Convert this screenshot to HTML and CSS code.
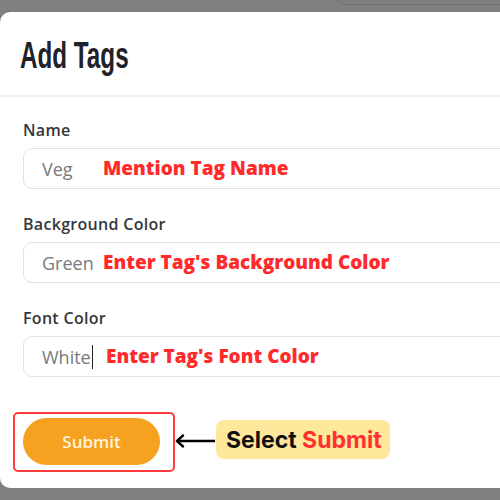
FILE: index.html
```html
<!DOCTYPE html>
<html>
<head>
<meta charset="utf-8">
<link rel="stylesheet" href="styles.css">
</head>
<body>
<div class="behind"></div>
<div class="modal">
  <div class="modal-header"><h1 class="title">Add Tags</h1></div>
  <div class="modal-body">
    <div class="field">
      <label class="label">Name</label>
      <div class="input"><span class="value">Veg</span><span class="note">Mention Tag Name</span></div>
    </div>
    <div class="field">
      <label class="label">Background Color</label>
      <div class="input"><span class="value">Green</span><span class="note">Enter Tag's Background Color</span></div>
    </div>
    <div class="field">
      <label class="label">Font Color</label>
      <div class="input"><span class="value">White</span><span class="caret"></span><span class="note note-3">Enter Tag's Font Color</span></div>
    </div>
    <div class="actions">
      <div class="highlight"><button class="submit">Submit</button></div>
      <div class="arrow">
        <svg width="40" height="14" viewBox="0 0 40 14"><path d="M40 7H3" stroke="#000" stroke-width="2.4" fill="none"/><path d="M8 1.5L2 7l6 5.5" stroke="#000" stroke-width="2.4" fill="none" stroke-linecap="round" stroke-linejoin="round"/></svg>
      </div>
      <div class="callout">Select <span class="red">Submit</span></div>
    </div>
  </div>
</div>
</body>
</html>
```
FILE: styles.css
```css
html, body {
  margin: 0;
  padding: 0;
  background: #7f7f7f;
  overflow: hidden;
  width: 500px;
  height: 500px;
}
body {
  position: relative;
  font-family: "Open Sans", "Liberation Sans", sans-serif;
}
.behind {
  position: absolute;
  left: 336px;
  top: -20px;
  width: 200px;
  height: 23px;
  border: 1px solid #6f6f6f;
  border-radius: 9px;
}
.modal {
  margin-top: 12px;
  width: 620px;
  height: 476px;
  background: #fff;
  border-radius: 10px;
  box-sizing: border-box;
}
.modal-header {
  height: 83px;
  border-bottom: 2px solid #eeeeee;
  display: flex;
  align-items: center;
  padding-left: 20px;
}
.title {
  margin: 0;
  font-family: "Liberation Sans", sans-serif;
  font-weight: 700;
  font-size: 37px;
  color: #1f2229;
  transform: scaleX(0.655);
  transform-origin: left center;
  white-space: nowrap;
  margin-top: 4px;
}
.modal-body {
  padding: 23px 0 0 23px;
  display: flex;
  flex-direction: column;
  gap: 25px;
}
.field {
  display: flex;
  flex-direction: column;
  gap: 8px;
}
.label {
  font-size: 16px;
  line-height: 20px;
  font-weight: 600;
  letter-spacing: 0.3px;
  color: #34373c;
}
.input {
  position: relative;
  height: 41px;
  box-sizing: border-box;
  border: 1px solid #e2e2e2;
  border-radius: 9px;
  display: flex;
  align-items: center;
  padding-left: 18px;
  width: 560px;
}
.value {
  font-size: 18px;
  color: #777a7e;
}
.caret {
  width: 1px;
  height: 24px;
  background: #222;
  margin-left: 1px;
}
.note {
  position: absolute;
  left: 79px;
  top: 7px;
  font-family: "Open Sans", sans-serif;
  font-weight: 800;
  font-size: 19px;
  line-height: 24px;
  color: #ff2b2b;
  white-space: nowrap;
}
.note-3 { left: 82px; }
.actions {
  display: flex;
  align-items: center;
  margin-top: 10px;
  margin-left: -10px;
}
.highlight {
  border: 2px solid #ff3b3b;
  border-radius: 5px;
  padding: 4px 13px 5px 8px;
  display: flex;
}
.submit {
  width: 137px;
  height: 47px;
  border: none;
  border-radius: 24px;
  background: #f6a11f;
  color: #fff3dc;
  font-family: "Open Sans", sans-serif;
  font-size: 17px;
  font-weight: 600;
}
.arrow {
  width: 41px;
  display: flex;
  margin-top: -2px;
}
.callout {
  background: #fde89c;
  border-radius: 8px;
  height: 39px;
  width: 174px;
  box-sizing: border-box;
  padding-left: 10px;
  display: flex;
  align-items: center;
  font-family: "Inter", sans-serif;
  font-weight: 700;
  font-size: 23px;
  color: #111;
  margin-top: -5px;
  white-space: pre;
}
.red { color: #ff3030; }
```
